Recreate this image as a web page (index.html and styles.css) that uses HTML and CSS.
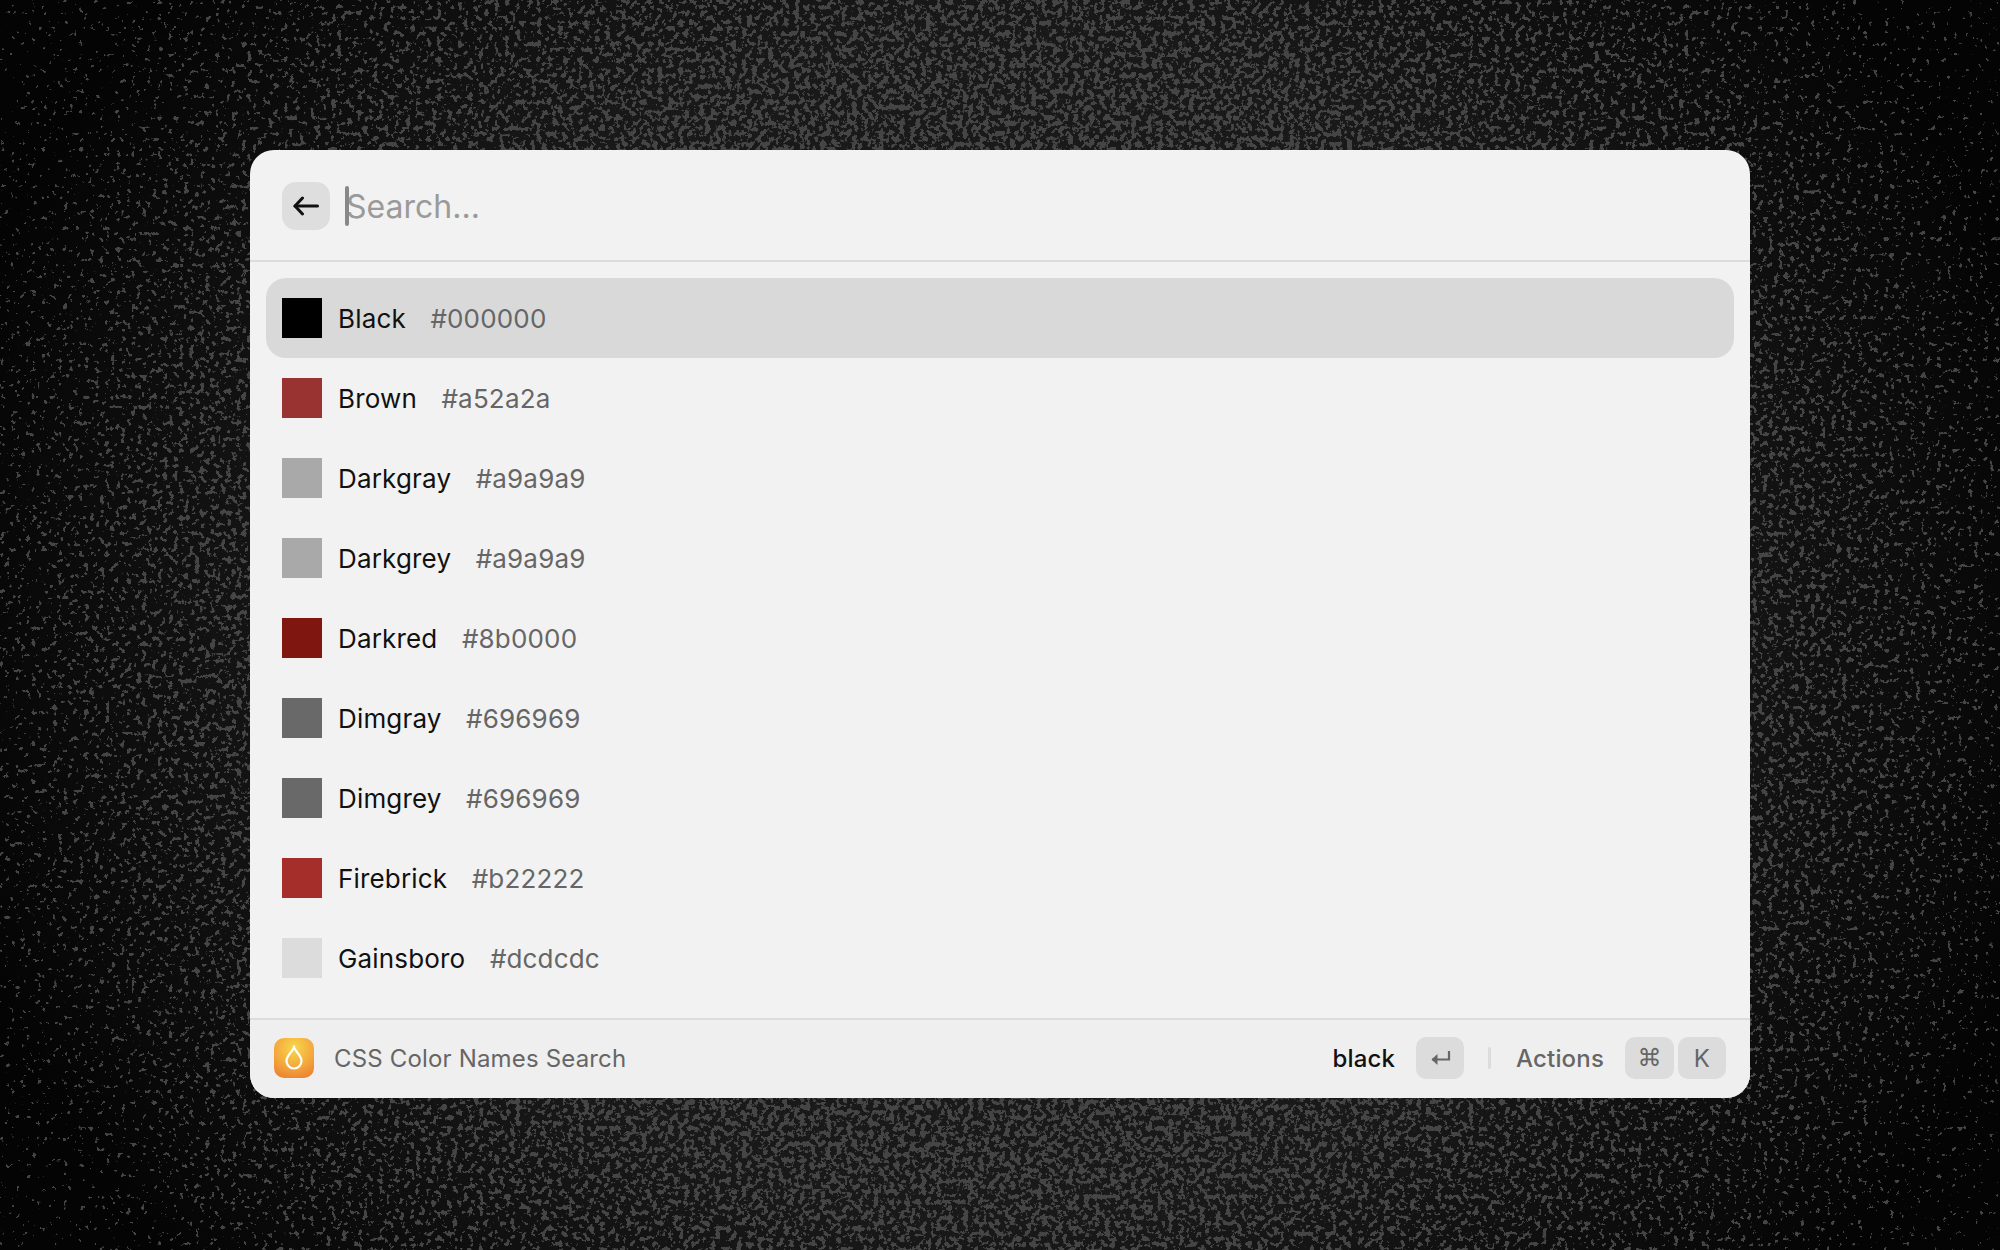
FILE: index.html
```html
<!DOCTYPE html>
<html>

<head>
    <title>CSS Color Names Search</title>
    <link rel="stylesheet" href="styles.css">
</head>

<body>

    <!-- speckled wallpaper: the gradient drives how dense the specks get -->
    <svg class="wallpaper" width="2000" height="1250" aria-hidden="true">
        <defs>
            <radialGradient id="density" gradientUnits="userSpaceOnUse" cx="0" cy="0" r="1"
                gradientTransform="translate(1000 625) scale(1150 1100)">
                <stop offset="0" stop-color="#fff" />
                <stop offset="0.5" stop-color="#f0f0f0" />
                <stop offset="0.74" stop-color="#a8a8a8" />
                <stop offset="0.95" stop-color="#484848" />
                <stop offset="1" stop-color="#383838" />
            </radialGradient>
            <radialGradient id="glow" gradientUnits="userSpaceOnUse" cx="0" cy="0" r="1"
                gradientTransform="translate(1000 625) scale(1080 1000)">
                <stop offset="0" stop-color="#1c1c1c" />
                <stop offset="0.6" stop-color="#191919" />
                <stop offset="1" stop-color="#040404" />
            </radialGradient>
            <filter id="specks" x="0" y="0" width="100%" height="100%" color-interpolation-filters="sRGB">
                <feTurbulence type="fractalNoise" baseFrequency="0.19" numOctaves="3" seed="11" result="noise" />
                <feColorMatrix in="noise" type="matrix"
                    values="0 0 0 1 0  0 0 0 1 0  0 0 0 1 0  0 0 0 0 1" result="grain" />
                <feComposite in="grain" in2="SourceGraphic" operator="arithmetic" k1="0" k2="1" k3="0.3" k4="-0.3" result="mix" />
                <feComponentTransfer in="mix" result="mask">
                    <feFuncR type="linear" slope="24" intercept="-11.7" />
                    <feFuncG type="linear" slope="24" intercept="-11.7" />
                    <feFuncB type="linear" slope="24" intercept="-11.7" />
                </feComponentTransfer>
                <feColorMatrix in="mask" type="matrix"
                    values="0 0 0 0 0.27  0 0 0 0 0.27  0 0 0 0 0.27  1 0 0 0 0" />
            </filter>
        </defs>
        <rect width="2000" height="1250" fill="url(#glow)" />
        <rect width="2000" height="1250" fill="url(#density)" filter="url(#specks)" />
    </svg>

    <div class="window">

        <div class="search-bar">
            <button type="button" class="back-button">
                <svg width="26" height="26" viewBox="0 0 26 26" fill="none" stroke="#111" stroke-width="3"
                    stroke-linecap="round" stroke-linejoin="round">
                    <path d="M24.500 13H2" />
                    <path d="M9.500 5 2 13l7.500 8" />
                </svg>
            </button>
            <div class="search-input"><span class="caret"></span>Search...</div>
        </div>

        <div class="color-list">
            <div class="color-row active">
                <span class="swatch swatch-black"></span>
                <span class="color-name">Black</span>
                <span class="color-hex">#000000</span>
            </div>
            <div class="color-row">
                <span class="swatch swatch-brown"></span>
                <span class="color-name">Brown</span>
                <span class="color-hex">#a52a2a</span>
            </div>
            <div class="color-row">
                <span class="swatch swatch-darkgray"></span>
                <span class="color-name">Darkgray</span>
                <span class="color-hex">#a9a9a9</span>
            </div>
            <div class="color-row">
                <span class="swatch swatch-darkgray"></span>
                <span class="color-name">Darkgrey</span>
                <span class="color-hex">#a9a9a9</span>
            </div>
            <div class="color-row">
                <span class="swatch swatch-darkred"></span>
                <span class="color-name">Darkred</span>
                <span class="color-hex">#8b0000</span>
            </div>
            <div class="color-row">
                <span class="swatch swatch-dimgray"></span>
                <span class="color-name">Dimgray</span>
                <span class="color-hex">#696969</span>
            </div>
            <div class="color-row">
                <span class="swatch swatch-dimgray"></span>
                <span class="color-name">Dimgrey</span>
                <span class="color-hex">#696969</span>
            </div>
            <div class="color-row">
                <span class="swatch swatch-firebrick"></span>
                <span class="color-name">Firebrick</span>
                <span class="color-hex">#b22222</span>
            </div>
            <div class="color-row">
                <span class="swatch swatch-gainsboro"></span>
                <span class="color-name">Gainsboro</span>
                <span class="color-hex">#dcdcdc</span>
            </div>
        </div>

        <div class="footer">
            <div class="app-icon">
                <svg width="20" height="26" viewBox="0 0 20 26" fill="none" stroke="#fff" stroke-width="2.2">
                    <path d="M10 2.200C8.800 6.500 2.500 10.500 2.500 16a7.500 7.500 0 0 0 15 0c0-5.500-6.300-9.500-7.500-13.800Z" />
                </svg>
            </div>
            <span class="app-name">CSS Color Names Search</span>
            <span class="primary-action">black</span>
            <span class="key key-return">
                <svg width="22" height="16" viewBox="0 0 22 16" fill="none" stroke="#666" stroke-width="2.2">
                    <path d="M20 1v8.500H3" />
                    <path d="M8.500 4 2.500 9.500 8.500 15" fill="#666" stroke="none" />
                </svg>
            </span>
            <span class="footer-divider"></span>
            <span class="actions-label">Actions</span>
            <div class="key-group">
                <span class="key key-symbol">⌘</span>
                <span class="key">K</span>
            </div>
        </div>

    </div>

</body>

</html>
```

FILE: styles.css
```css
body {
    font-family: "Inter", "Liberation Sans", sans-serif;
    background: #000;
    margin: 0;
    height: 1250px;
    overflow: hidden;
    position: relative;
    box-sizing: border-box;
    padding-top: 150px;
}

.wallpaper {
    position: absolute;
    top: 0;
    left: 0;
}

.window {
    position: relative;
    width: 1500px;
    height: 948px;
    margin: 0 auto;
    background: #f2f2f2;
    border-radius: 24px;
    overflow: hidden;
    display: flex;
    flex-direction: column;
}

.search-bar {
    display: flex;
    align-items: center;
    height: 112px;
    box-sizing: border-box;
    padding: 2px 32px 0;
    border-bottom: 2px solid #dcdcdc;
    flex-shrink: 0;
}

.back-button {
    width: 48px;
    height: 48px;
    padding: 0;
    border: none;
    border-radius: 14px;
    background: #dedede;
    display: flex;
    align-items: center;
    justify-content: center;
}

.search-input {
    position: relative;
    margin-left: 16px;
    font-size: 32px;
    color: #9a9a9a;
}

.caret {
    position: absolute;
    left: -1px;
    top: -1px;
    width: 4px;
    height: 40px;
    border-radius: 2px;
    background: #888;
}

.color-list {
    flex: 1;
    padding: 16px;
}

.color-row {
    display: flex;
    align-items: center;
    height: 80px;
    padding: 0 16px;
    border-radius: 20px;
    font-size: 26px;
    letter-spacing: 0.17px;
}

.color-row.active {
    background: #d9d9d9;
}

.swatch {
    width: 40px;
    height: 40px;
    margin-right: 16px;
    flex-shrink: 0;
}

.swatch-black { background: #000; }
.swatch-brown { background: #983332; }
.swatch-darkgray { background: #a9a9a9; }
.swatch-darkred { background: #7f1710; }
.swatch-dimgray { background: #696969; }
.swatch-firebrick { background: #a52d2a; }
.swatch-gainsboro { background: #dcdcdc; }

.color-name {
    color: #111;
    margin-right: 24.5px;
}

.color-hex {
    color: #666;
}

.footer {
    display: flex;
    align-items: center;
    height: 80px;
    box-sizing: border-box;
    padding: 0 24px 2px;
    border-top: 2px solid #dcdcdc;
    background: #efefef;
    font-size: 24px;
    letter-spacing: 0.17px;
    flex-shrink: 0;
}

.app-icon {
    width: 40px;
    height: 40px;
    border-radius: 10px;
    background: radial-gradient(circle at 50% 25%, #f6d84c 0%, #f4a63c 55%, #e8772e 100%);
    display: flex;
    align-items: center;
    justify-content: center;
}

.app-name {
    margin-left: 20px;
    color: #666;
    margin-right: auto;
}

.primary-action {
    color: #111;
    font-weight: 500;
}

.key {
    display: flex;
    align-items: center;
    justify-content: center;
    width: 48px;
    height: 42px;
    border-radius: 10px;
    background: #dcdcdc;
    color: #666;
}

.key-return {
    margin-left: 21px;
}

.key-symbol {
    width: 49px;
    font-family: "DejaVu Sans", sans-serif;
}

.key-group {
    display: flex;
    gap: 4px;
    margin-left: 21px;
}

.footer-divider {
    width: 3px;
    height: 22px;
    margin: 0 25px 0 24px;
    border-radius: 2px;
    background: #dcdcdc;
}

.actions-label {
    color: #666;
    font-weight: 500;
}
```
